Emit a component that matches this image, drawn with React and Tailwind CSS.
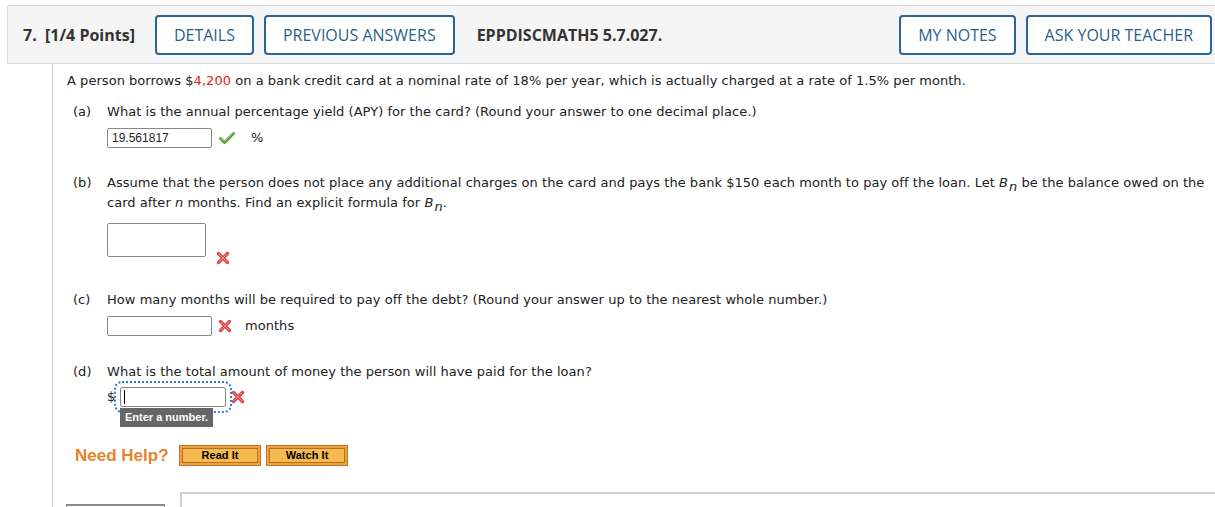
import React from 'react';

const body = { fontFamily: '"DejaVu Sans", Verdana, sans-serif' };
const arial = { fontFamily: '"Liberation Sans", Arial, sans-serif' };

const Check = () => (
  <svg width="16" height="14" viewBox="0 0 16 14" className="block">
    <path d="M1.5 7.5 L5.5 11.5 L14.5 2.5" fill="none" stroke="#5a9e3a" strokeWidth="3" strokeLinecap="round" strokeLinejoin="round" />
    <path d="M2 7 L5.5 10.5 L14 2" fill="none" stroke="#8fd16a" strokeWidth="1" strokeLinecap="round" />
  </svg>
);

const Cross = () => (
  <svg width="14" height="14" viewBox="0 0 14 14" className="block">
    <path d="M2.5 2.5 L11.5 11.5 M11.5 2.5 L2.5 11.5" stroke="#e04848" strokeWidth="3.4" strokeLinecap="round" />
    <path d="M3 3 L11 11 M11 3 L3 11" stroke="#f58a8a" strokeWidth="1" strokeLinecap="round" />
  </svg>
);

const HeadBtn = ({ children }) => (
  <button className="h-[40px] px-[17px] border-2 border-[#2b6598] rounded-[4px] text-[16px] font-medium text-[#2b5f8e] bg-white">
    {children}
  </button>
);

const HelpBtn = ({ children }) => (
  <button className="w-[82px] h-[21px] border border-[#c0772a] bg-[#f0a040] p-[2px]">
    <span className="flex items-center justify-center h-full border border-[#b87020] bg-[#f6bb50] text-[11px] font-bold text-black leading-none" style={arial}>
      {children}
    </span>
  </button>
);

const Sub = () => (
  <sub className="italic relative top-[4px] ml-[1px] text-[13px] leading-none align-baseline">n</sub>
);

const Part = ({ label, children }) => (
  <div className="flex pl-[6px] leading-[20px] text-[13px]">
    <span className="w-[34px] shrink-0">{label}</span>
    <div className="flex-1">{children}</div>
  </div>
);

const App = () => {
  return (
    <div className="w-[1215px] h-[507px] overflow-hidden bg-white text-[#222] tracking-[0.04px]" style={body}>
      <div className="mt-[5px] ml-[7px] h-[59px] flex items-center bg-[#f5f5f5] border-t border-b border-l border-[#dcdcdc] pl-[15px] pr-[3px] tracking-normal" style={{ fontFamily: '"Open Sans", sans-serif' }}>
        <span className="text-[16px] font-bold text-[#333] mr-[20px]">7.&nbsp; [1/4 Points]</span>
        <div className="flex gap-[10px]">
          <HeadBtn>DETAILS</HeadBtn>
          <HeadBtn>PREVIOUS ANSWERS</HeadBtn>
        </div>
        <span className="ml-[22px] text-[16px] font-bold text-[#333]">EPPDISCMATH5 5.7.027.</span>
        <div className="ml-auto flex gap-[10px]">
          <HeadBtn>MY NOTES</HeadBtn>
          <HeadBtn>ASK YOUR TEACHER</HeadBtn>
        </div>
      </div>

      <div className="ml-[52px] border-l border-[#cfcfcf] pl-[14px] pt-[7px] h-[443px]">
        <p className="text-[13px] leading-[20px]">
          A person borrows $<span className="text-[#e21b1b]">4,200</span> on a bank credit card at a nominal rate of 18% per year, which is actually charged at a rate of 1.5% per month.
        </p>

        <div className="mt-[11px]">
          <Part label="(a)">
            <div>What is the annual percentage yield (APY) for the card? (Round your answer to one decimal place.)</div>
            <div className="mt-[6px] flex items-center">
              <div className="w-[105px] h-[20px] border border-[#888] rounded-[2px] px-[4px] text-[12px] leading-[18px] text-[#222] tracking-normal" style={arial}>19.561817</div>
              <span className="ml-[7px]"><Check /></span>
              <span className="ml-[16px]">%</span>
            </div>
          </Part>
        </div>

        <div className="mt-[25px]">
          <Part label="(b)">
            <div>
              Assume that the person does not place any additional charges on the card and pays the bank $150 each month to pay off the loan. Let <i>B</i><Sub /> be the balance owed on the
              <br />
              card after <i>n</i> months. Find an explicit formula for <i>B</i><Sub />.
            </div>
            <div className="mt-[10px] flex items-start">
              <div className="w-[99px] h-[34px] border border-[#888] rounded-[2px]"></div>
              <span className="ml-[10px] mt-[28px]"><Cross /></span>
            </div>
          </Part>
        </div>

        <div className="mt-[25px]">
          <Part label="(c)">
            <div>How many months will be required to pay off the debt? (Round your answer up to the nearest whole number.)</div>
            <div className="mt-[6px] flex items-center">
              <div className="w-[105px] h-[20px] border border-[#888] rounded-[2px]"></div>
              <span className="ml-[6px]"><Cross /></span>
              <span className="ml-[13px]">months</span>
            </div>
          </Part>
        </div>

        <div className="mt-[26px]">
          <Part label="(d)">
            <div>What is the total amount of money the person will have paid for the loan?</div>
            <div className="mt-[5px] flex items-center">
              <span className="text-[13px] w-[13px]">$</span>
              <div className="relative">
                <div className="w-[106px] h-[20px] border border-[#888] rounded-[2px] outline-2 outline-dotted outline-[#2d7be0] outline-offset-[4px] flex items-center pl-[3px]">
                  <span className="w-px h-[14px] bg-black"></span>
                </div>
                <div className="absolute left-0 top-[21px] bg-[#666] text-white text-[11px] font-bold leading-[19px] px-[5px] whitespace-nowrap tracking-normal" style={arial}>Enter a number.</div>
              </div>
              <span className="ml-[5px]"><Cross /></span>
            </div>
          </Part>
        </div>

        <div className="mt-[36px] ml-[8px] flex items-center" style={arial}>
          <span className="text-[17px] font-bold text-[#e8832a] w-[104px] tracking-normal">Need Help?</span>
          <div className="flex gap-[5px]">
            <HelpBtn>Read It</HelpBtn>
            <HelpBtn>Watch It</HelpBtn>
          </div>
        </div>

        <div className="mt-[23px] flex items-start">
          <div className="-ml-px mt-[12px] w-[99px] h-[20px] border-t-2 border-l border-r border-[#8a8a8a]"></div>
          <div className="ml-[15px] flex-1 h-[40px] border-t-2 border-l-2 border-[#cfcfcf]"></div>
        </div>
      </div>
    </div>
  );
};

export default App;
